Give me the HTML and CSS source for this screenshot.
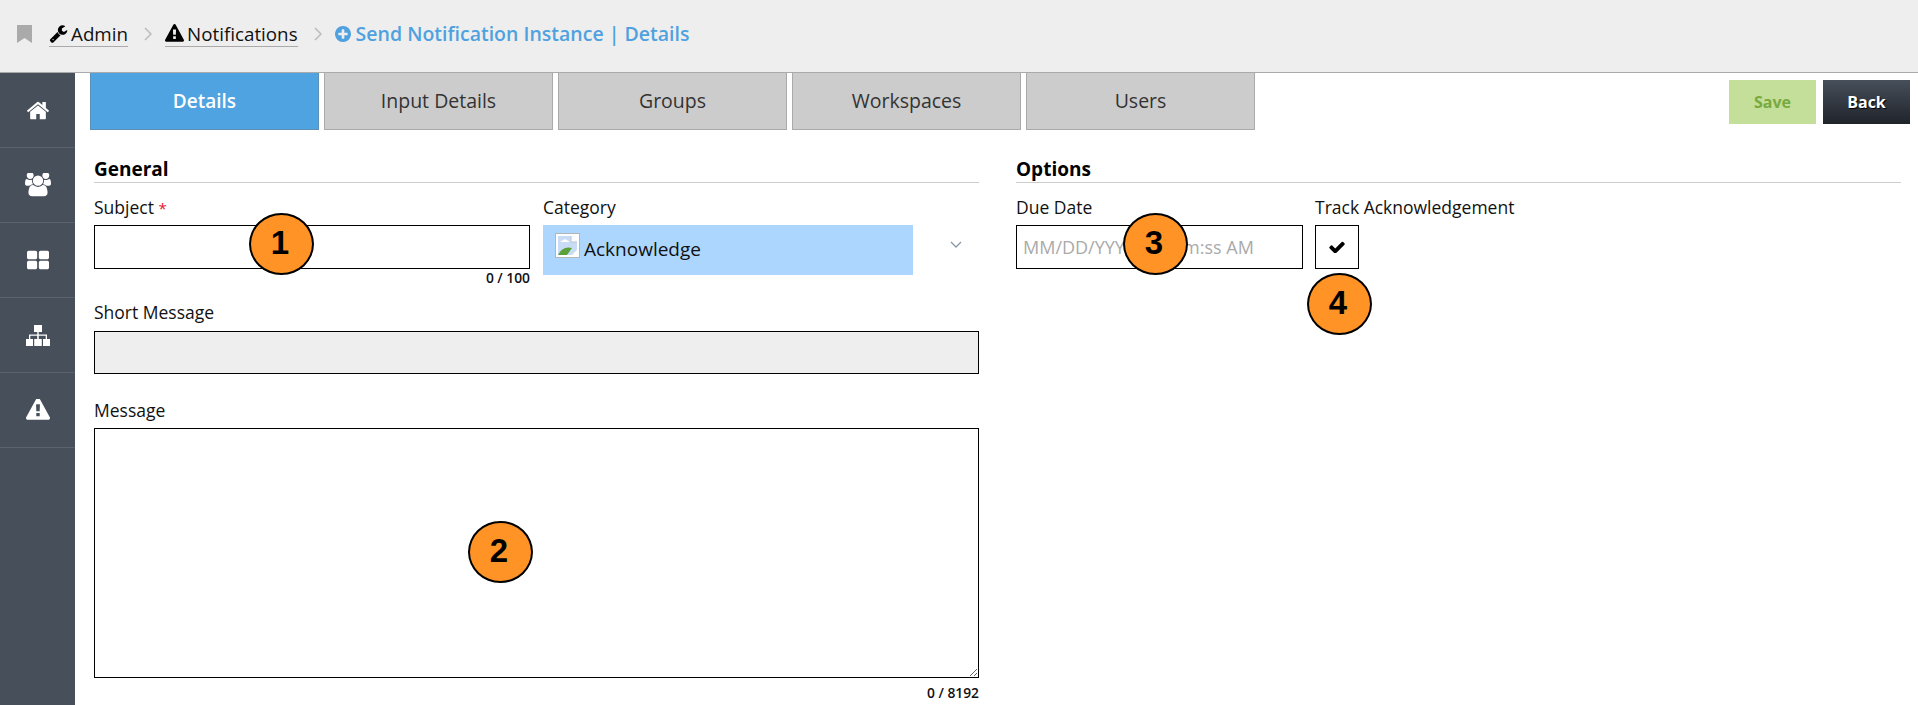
FILE: index.html
```html
<!DOCTYPE html>
<html lang="en">
<head>
  <meta charset="UTF-8">
  <meta name="viewport" content="width=device-width, initial-scale=1.0">
  <title>Send Notification Instance | Details</title>
  <link rel="stylesheet" href="styles.css">
</head>
<body>
  <header class="crumbs">
    <svg class="bookmark" viewBox="0 0 15 18"><path d="M0 0h15v18l-7.500-5L0 18z"/></svg>
    <a class="crumb crumb-admin">
      <svg class="crumb-icon" viewBox="0 0 1792 1792"><path d="M448 1472q0-26-19-45t-45-19-45 19-19 45 19 45 45 19 45-19 19-45zm644-420l-682 682q-37 37-90 37-52 0-91-37l-106-108q-38-36-38-90 0-53 38-91l681-681q39 98 114.500 173.500t173.500 114.500zm634-435q0 39-23 106-47 134-164.500 217.500t-258.500 83.500q-185 0-316.500-131.500t-131.500-316.500 131.500-316.500 316.500-131.500q58 0 121.500 16.500t107.500 46.500q16 11 16 28t-16 28l-293 169v224l193 107q5-3 79-48.500t135.500-81 70.500-35.500q15 0 23.500 10t8.500 25z"/></svg>
      Admin
    </a>
    <svg class="crumb-sep" viewBox="0 0 8 14"><path d="M1 1l6 6-6 6"/></svg>
    <a class="crumb">
      <svg class="crumb-icon" viewBox="0 0 1792 1792"><path d="M1024 1375v-190q0-14-9.500-23.500t-22.500-9.500h-192q-13 0-22.500 9.500t-9.500 23.500v190q0 14 9.500 23.500t22.500 9.500h192q13 0 22.500-9.500t9.500-23.500zm-2-374l18-459q0-12-10-19-13-11-24-11h-220q-11 0-24 11-10 7-10 21l17 457q0 10 10 16.500t24 6.500h185q14 0 23.500-6.500t10.500-16.500zm-14-934l768 1408q35 63-2 126-17 29-46.500 46t-63.500 17h-1536q-34 0-63.500-17t-46.500-46q-37-63-2-126l768-1408q17-31 47-49t65-18 65 18 47 49z"/></svg>
      Notifications
    </a>
    <svg class="crumb-sep" viewBox="0 0 8 14"><path d="M1 1l6 6-6 6"/></svg>
    <h1 class="page-title">
      <svg class="title-icon" viewBox="128 128 1536 1536"><path d="M1344 960v-128q0-26-19-45t-45-19h-256v-256q0-26-19-45t-45-19h-128q-26 0-45 19t-19 45v256h-256q-26 0-45 19t-19 45v128q0 26 19 45t45 19h256v256q0 26 19 45t45 19h128q26 0 45-19t19-45v-256h256q26 0 45-19t19-45zm320-64q0 209-103 385.500t-279.500 279.500-385.500 103-385.500-103-279.500-279.500-103-385.500 103-385.500 279.500-279.500 385.500-103 385.500 103 279.500 279.500 103 385.500z"/></svg>
      Send Notification Instance | Details
    </h1>
  </header>

  <div class="shell">
    <nav class="sidebar">
      <a class="side-item">
        <svg class="side-icon" viewBox="90 200 1612 1300"><path d="M1472 992v480q0 26-19 45t-45 19h-384v-384h-256v384h-384q-26 0-45-19t-19-45v-480q0-1 .5-3t.5-3l575-474 575 474q1 2 1 6zm223-69l-62 74q-8 9-21 11h-3q-13 0-21-7l-692-577-692 577q-12 8-24 7-13-2-21-11l-62-74q-8-10-7-23.500t11-21.500l719-599q32-26 76-26t76 26l244 204v-195q0-14 9-23t23-9h192q14 0 23 9t9 23v408l219 182q10 8 11 21.500t-7 23.500z"/></svg>
      </a>
      <a class="side-item">
        <svg class="side-icon icon-users" viewBox="0 128 1920 1664"><path d="M593 896q-162 5-265 128h-134q-82 0-138-40.500t-56-118.500q0-353 124-353 6 0 43.500 21t97.500 42.500 119 21.500q67 0 133-23-5 37-5 66 0 139 81 256zm1071 637q0 120-73 189.500t-194 69.500h-874q-121 0-194-69.500t-73-189.500q0-53 3.500-103.500t14-109 26.500-108.500 43-97.500 62-81 85.500-53.500 111.500-20q10 0 43 21.500t73 48 107 48 135 21.500 135-21.500 107-48 73-48 43-21.500q61 0 111.500 20t85.500 53.500 62 81 43 97.500 26.500 108.500 14 109 3.500 103.500zm-1024-1277q0 106-75 181t-181 75-181-75-75-181 75-181 181-75 181 75 75 181zm704 384q0 159-112.500 271.500t-271.500 112.500-271.500-112.500-112.500-271.500 112.500-271.500 271.500-112.500 271.500 112.500 112.500 271.500zm576 225q0 78-56 118.500t-138 40.500h-134q-103-123-265-128 81-117 81-256 0-29-5-66 66 23 133 23 59 0 119-21.500t97.500-42.500 43.500-21q124 0 124 353zm-128-609q0 106-75 181t-181 75-181-75-75-181 75-181 181-75 181 75 75 181z"/></svg>
      </a>
      <a class="side-item">
        <svg class="side-icon" viewBox="64 128 1664 1408"><path d="M832 1024v384q0 52-38 90t-90 38h-512q-52 0-90-38t-38-90v-384q0-52 38-90t90-38h512q52 0 90 38t38 90zm0-768v384q0 52-38 90t-90 38h-512q-52 0-90-38t-38-90v-384q0-52 38-90t90-38h512q52 0 90 38t38 90zm896 768v384q0 52-38 90t-90 38h-512q-52 0-90-38t-38-90v-384q0-52 38-90t90-38h512q52 0 90 38t38 90zm0-768v384q0 52-38 90t-90 38h-512q-52 0-90-38t-38-90v-384q0-52 38-90t90-38h512q52 0 90 38t38 90z"/></svg>
      </a>
      <a class="side-item">
        <svg class="side-icon icon-sitemap" viewBox="0 0 24 21"><path d="M8 0h8v7h-3.300v2.500H21V14h3v7h-7v-7h2.700v-3.200h-6.900V14h3v7H8.200v-7h3v-3.200H4.300V14H7v7H0v-7h3V9.500h8.300V7H8z"/></svg>
      </a>
      <a class="side-item">
        <svg class="side-icon icon-warning" viewBox="0 0 1792 1610"><path transform="translate(0 -128)" d="M1024 1375v-190q0-14-9.500-23.500t-22.500-9.500h-192q-13 0-22.500 9.500t-9.500 23.500v190q0 14 9.500 23.500t22.500 9.500h192q13 0 22.500-9.500t9.500-23.500zm-2-374l18-459q0-12-10-19-13-11-24-11h-220q-11 0-24 11-10 7-10 21l17 457q0 10 10 16.500t24 6.500h185q14 0 23.500-6.500t10.500-16.500zm-14-934l768 1408q35 63-2 126-17 29-46.500 46t-63.500 17h-1536q-34 0-63.500-17t-46.500-46q-37-63-2-126l768-1408q17-31 47-49t65-18 65 18 47 49z"/></svg>
      </a>
    </nav>

    <main class="content">
      <div class="toolbar">
        <div class="tabs">
          <a class="tab tab-active">Details</a>
          <a class="tab">Input Details</a>
          <a class="tab">Groups</a>
          <a class="tab">Workspaces</a>
          <a class="tab">Users</a>
        </div>
        <div class="actions">
          <button class="btn btn-save" disabled>Save</button>
          <button class="btn btn-back">Back</button>
        </div>
      </div>

      <form class="columns">
        <section class="column">
          <h2 class="section-title">General</h2>
          <div class="field-row">
            <div class="field">
              <label class="field-label">Subject <span class="required">*</span></label>
              <input class="text-input" type="text">
              <div class="counter">0 / 100</div>
            </div>
            <div class="field">
              <label class="field-label">Category</label>
              <div class="select-row">
                <div class="select-value">
                  <svg class="broken-img" viewBox="0 0 25 25">
                    <rect x=".5" y=".5" width="24" height="24" fill="#fff" stroke="#b5b5b5"/>
                    <path d="M3 3h13l6 6v13H3z" fill="#c9dcf5"/>
                    <path d="M16 3v6h6" fill="#fff" stroke="#b9c4d2"/>
                    <path d="M5 9l5-3 5 3z" fill="#fff"/>
                    <path d="M3 22c3-6 8-9 14-7l-5 7z" fill="#5aa13a"/>
                    <path d="M17 22l5-5v5z" fill="#fff"/>
                  </svg>
                  Acknowledge
                </div>
                <svg class="select-arrow" viewBox="0 0 12 8"><path d="M1 1l5 5 5-5"/></svg>
              </div>
            </div>
          </div>
          <div class="field field-short">
            <label class="field-label">Short Message</label>
            <input class="text-input text-input-disabled" type="text" disabled>
          </div>
          <div class="field field-message">
            <label class="field-label">Message</label>
            <textarea class="text-area"></textarea>
            <div class="counter counter-message">0 / 8192</div>
          </div>
        </section>

        <section class="column">
          <h2 class="section-title">Options</h2>
          <div class="options-row">
            <div class="field field-date">
              <label class="field-label">Due Date</label>
              <input class="text-input" type="text" placeholder="MM/DD/YYYY hh:mm:ss AM">
            </div>
            <div class="field">
              <label class="field-label">Track Acknowledgement</label>
              <div class="check-box">
                <svg class="check-icon" viewBox="100 270 1592 1200"><path d="M1671 566q0 40-28 68l-724 724-136 136q-28 28-68 28t-68-28l-136-136-362-362q-28-28-28-68t28-68l136-136q28-28 68-28t68 28l294 295 656-657q28-28 68-28t68 28l136 136q28 28 28 68z"/></svg>
              </div>
            </div>
          </div>
        </section>
      </form>
    </main>
  </div>

  <!-- numbered callouts on top of the screenshot -->
  <div class="callout callout-1">1</div>
  <div class="callout callout-2">2</div>
  <div class="callout callout-3">3</div>
  <div class="callout callout-4">4</div>
</body>
</html>
```

FILE: styles.css
```css
* {
  box-sizing: border-box;
}

html,
body {
  height: 705px;
}

body {
  margin: 0;
  overflow: hidden;
  position: relative;
  font-family: "Open Sans", sans-serif;
  font-size: 17.5px;
  color: #111;
  background: #fff;
}

/* Top breadcrumb bar */
.crumbs {
  display: flex;
  align-items: center;
  height: 73px;
  padding-left: 17px;
  background: #eee;
  border-bottom: 1px solid #aaa;
}

.bookmark {
  width: 15px;
  height: 18px;
  margin: 0 17px 4px 0;
  fill: #aaa;
}

.crumb {
  display: flex;
  align-items: center;
  gap: 3px;
  height: 30px;
  margin-bottom: 8px;
  padding-top: 4px;
  font-size: 18.8px;
  border-bottom: 1px solid #aaa;
  white-space: nowrap;
}

.crumb-icon {
  width: 19px;
  height: 19px;
}

.crumb-sep {
  width: 8px;
  height: 14px;
  margin: 0 13px 4px 16px;
  fill: none;
  stroke: #bbb;
  stroke-width: 1.5;
}

.page-title {
  display: flex;
  align-items: center;
  gap: 5px;
  margin: 0 0 5px;
  font-size: 19.5px;
  font-weight: 600;
  color: #4fa1df;
  white-space: nowrap;
}

.title-icon {
  width: 16px;
  height: 16px;
  fill: #4fa1df;
}

.shell {
  display: flex;
  height: 632px;
}

/* Left nav */
.sidebar {
  flex: none;
  width: 75px;
  background: #474f5a;
}

.side-item {
  display: flex;
  align-items: center;
  justify-content: center;
  height: 75px;
  border-bottom: 1px solid #5b626d;
}

.side-icon {
  width: 22px;
  height: 22px;
  fill: #fff;
}

.icon-users {
  width: 26px;
  height: 24px;
}

.icon-sitemap {
  width: 24px;
  height: 21px;
}

.icon-warning {
  width: 24px;
  height: 22px;
}

.content {
  flex: 1;
  min-width: 0;
}

/* Tabs and buttons */
.toolbar {
  display: flex;
  justify-content: space-between;
  padding: 0 8px 0 15px;
}

.tabs {
  display: flex;
  gap: 5px;
}

.tab {
  display: flex;
  align-items: center;
  justify-content: center;
  width: 229px;
  height: 57px;
  padding-bottom: 1px;
  font-size: 19.5px;
  font-weight: 500;
  color: #333;
  background: #ccc;
  border: 1px solid #aaa;
  border-top: none;
}

.tab-active {
  color: #fff;
  font-size: 19px;
  font-weight: 600;
  background: #4fa3e0;
  border-color: #5c90b8;
}

.actions {
  display: flex;
  gap: 7px;
  padding-top: 7px;
}

.btn {
  width: 87px;
  height: 44px;
  padding: 0;
  border: none;
  font-family: inherit;
  font-size: 16px;
  font-weight: 700;
}

.btn-save {
  color: #79aa3f;
  background: #c3df9a;
}

.btn-back {
  color: #fff;
  background: linear-gradient(to bottom, #474f5b, #20232a);
  text-shadow: 1px 1px 1px #000;
}

/* Form */
.columns {
  display: grid;
  grid-template-columns: 885px 885px;
  gap: 37px;
  padding: 28px 0 0 19px;
}

.section-title {
  margin: 0;
  height: 25px;
  font-size: 19px;
  line-height: 22px;
  font-weight: 700;
  color: #000;
  border-bottom: 1px solid #ccc;
}

.field-row {
  display: grid;
  grid-template-columns: 436px 436px;
  gap: 13px;
}

.field-label {
  display: block;
  height: 42px;
  padding-top: 12px;
  line-height: 25px;
}

.required {
  font-size: 15px;
  color: #e8132b;
}

.text-input,
.text-area {
  display: block;
  width: 100%;
  height: 44px;
  padding: 0 6px;
  border: 1px solid #000;
  border-radius: 0;
  outline: none;
  font-family: inherit;
  font-size: 18px;
  background: #fff;
}

.text-input::placeholder {
  color: #aaa;
  opacity: 1;
}

.text-input-disabled {
  height: 43px;
  background: #eee;
}

.text-area {
  height: 250px;
  resize: vertical;
}

.counter {
  height: 20px;
  font-size: 13.8px;
  font-weight: 600;
  line-height: 17px;
  text-align: right;
}

.counter-message {
  margin-top: 6px;
}

.select-row {
  display: flex;
  align-items: flex-start;
}

.select-value {
  display: flex;
  align-items: center;
  gap: 4px;
  width: 370px;
  height: 50px;
  padding: 0 12px 3px;
  font-size: 19px;
  background: #add6ff;
}

.broken-img {
  width: 25px;
  height: 25px;
  margin-top: -6px;
}

.select-arrow {
  width: 12px;
  height: 8px;
  margin: 16px 0 0 37px;
  fill: none;
  stroke: #8a97a6;
  stroke-width: 1.3;
}

.field-short .field-label {
  height: 43px;
  padding-top: 12px;
}

.field-short {
  margin-top: -1px;
}

.field-message .field-label {
  height: 54px;
  padding-top: 24px;
}

.options-row {
  display: flex;
  gap: 12px;
}

.field-date {
  width: 287px;
}

.check-box {
  display: flex;
  align-items: center;
  justify-content: center;
  width: 44px;
  height: 44px;
  border: 1px solid #000;
}

.check-icon {
  width: 16px;
  height: 12px;
}

/* Callouts */
.callout {
  position: absolute;
  display: flex;
  align-items: center;
  justify-content: center;
  width: 65px;
  height: 62px;
  padding: 0 3px 2px 0;
  font-family: "Liberation Sans", Arial, sans-serif;
  font-size: 33px;
  font-weight: 700;
  color: #000;
  background: #ff9326;
  border: 2px solid #000;
  border-radius: 50%;
}

.callout-1 {
  left: 249px;
  top: 213px;
}

.callout-2 {
  left: 468px;
  top: 521px;
}

.callout-3 {
  left: 1123px;
  top: 213px;
}

.callout-4 {
  left: 1307px;
  top: 273px;
}
```
